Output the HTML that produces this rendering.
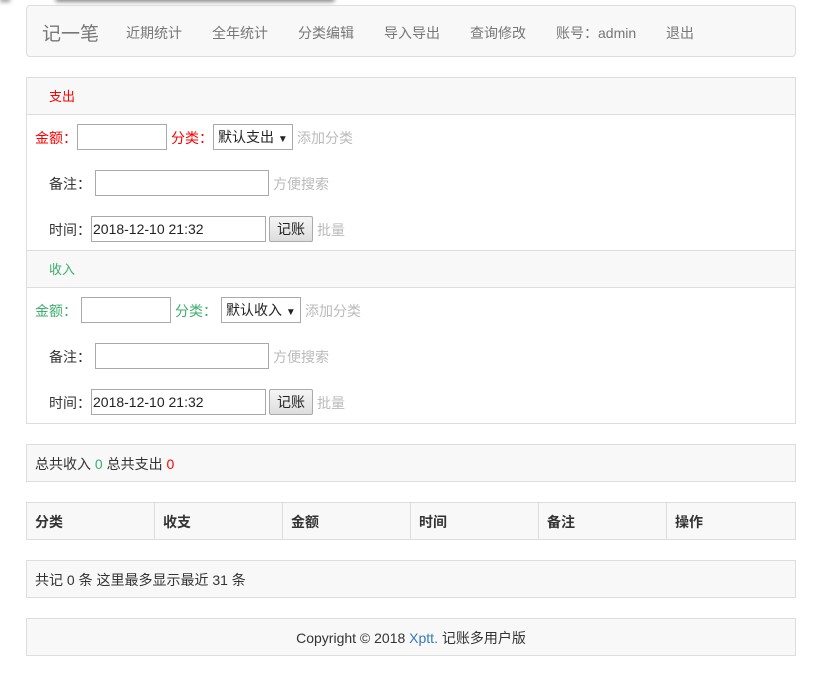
<!DOCTYPE html>
<html><head><meta charset="utf-8"><style>
*{box-sizing:border-box;margin:0;padding:0}
body{width:816px;height:680px;background:#fff;font-family:"Liberation Sans","Noto Sans CJK SC",sans-serif;font-size:14px;color:#333;position:relative;overflow:hidden}
.abs{position:absolute}
.box{position:absolute;left:26px;width:770px;border:1px solid #ddd;background:#f8f8f8}
.nav a{position:absolute;top:17px;color:#777;font-size:14px}
.red{color:#f00}.green{color:#3cae6f}.gray{color:#bbb}
.inp{position:absolute;height:26px;border:1px solid #a9a9a9;background:#fff;font-size:14px;line-height:24px;padding-left:1px;color:#222}
.btn{position:absolute;height:26px;width:44px;border:1px solid #aaa;border-radius:2px;background:linear-gradient(#f6f6f6,#ddd);text-align:center;line-height:24px;font-size:14px;color:#222}
.sel{position:absolute;height:26px;border:1px solid #a9a9a9;background:#fff;font-size:14px;line-height:24px;padding-left:4px;color:#222}
.t{position:absolute;font-size:14px;line-height:16px}
</style></head><body>
<div class="abs" style="left:55px;top:-4px;width:280px;height:6px;background:#888;filter:blur(2px);border-radius:3px"></div>
<div class="abs" style="left:0;top:-3px;width:10px;height:5px;background:#999;filter:blur(2px)"></div>
<div class="box nav" style="top:5px;height:52px;border-radius:4px">
<span class="abs" style="left:15px;top:13px;font-size:19px;color:#777">记一笔</span>
<a style="left:99px">近期统计</a><a style="left:185px">全年统计</a><a style="left:271px">分类编辑</a><a style="left:357px">导入导出</a><a style="left:443px">查询修改</a><a style="left:529px">账号：admin</a><a style="left:639px">退出</a>
</div>
<div class="box" style="top:77px;height:347px;background:#fff">
<div class="abs" style="left:0;top:0;width:768px;height:37px;background:#f8f8f8;border-bottom:1px solid #ddd"></div>
<span class="t red" style="left:22px;top:11px;font-size:13px">支出</span>
<span class="t red" style="left:8px;top:52px">金额：</span>
<div class="inp" style="left:50px;top:46px;width:90px"></div>
<span class="t red" style="left:144px;top:52px">分类：</span>
<div class="sel" style="left:186px;top:46px;width:80px">默认支出 <span style="font-size:10px">▼</span></div>
<span class="t gray" style="left:270px;top:52px">添加分类</span>
<span class="t" style="left:22px;top:98px">备注：</span>
<div class="inp" style="left:68px;top:92px;width:174px"></div>
<span class="t gray" style="left:246px;top:98px">方便搜索</span>
<span class="t" style="left:22px;top:144px">时间：</span>
<div class="inp" style="left:64px;top:138px;width:175px">2018-12-10 21:32</div>
<div class="btn" style="left:242px;top:138px">记账</div>
<span class="t gray" style="left:290px;top:144px">批量</span>
<div class="abs" style="left:0;top:172px;width:768px;height:38px;background:#f8f8f8;border-top:1px solid #ddd;border-bottom:1px solid #ddd"></div>
<span class="t green" style="left:22px;top:184px;font-size:13px">收入</span>
<span class="t green" style="left:8px;top:225px">金额：</span>
<div class="inp" style="left:54px;top:219px;width:90px"></div>
<span class="t green" style="left:148px;top:225px">分类：</span>
<div class="sel" style="left:194px;top:219px;width:80px">默认收入 <span style="font-size:10px">▼</span></div>
<span class="t gray" style="left:278px;top:225px">添加分类</span>
<span class="t" style="left:22px;top:271px">备注：</span>
<div class="inp" style="left:68px;top:265px;width:174px"></div>
<span class="t gray" style="left:246px;top:271px">方便搜索</span>
<span class="t" style="left:22px;top:317px">时间：</span>
<div class="inp" style="left:64px;top:311px;width:175px">2018-12-10 21:32</div>
<div class="btn" style="left:242px;top:311px">记账</div>
<span class="t gray" style="left:290px;top:317px">批量</span>
</div>
<div class="box" style="top:444px;height:38px"><span class="t" style="left:8px;top:11px">总共收入 <span class="green">0</span> 总共支出 <span class="red">0</span></span></div>
<div class="box" style="top:502px;height:38px;font-weight:bold">
<span class="t" style="left:8px;top:11px">分类</span>
<div class="abs" style="left:127px;top:0;height:36px;border-left:1px solid #ddd"></div><span class="t" style="left:136px;top:11px">收支</span>
<div class="abs" style="left:255px;top:0;height:36px;border-left:1px solid #ddd"></div><span class="t" style="left:264px;top:11px">金额</span>
<div class="abs" style="left:383px;top:0;height:36px;border-left:1px solid #ddd"></div><span class="t" style="left:392px;top:11px">时间</span>
<div class="abs" style="left:511px;top:0;height:36px;border-left:1px solid #ddd"></div><span class="t" style="left:520px;top:11px">备注</span>
<div class="abs" style="left:639px;top:0;height:36px;border-left:1px solid #ddd"></div><span class="t" style="left:648px;top:11px">操作</span>
</div>
<div class="box" style="top:560px;height:38px"><span class="t" style="left:8px;top:11px">共记 0 条 这里最多显示最近 31 条</span></div>
<div class="box" style="top:618px;height:38px"><span class="t" style="left:0;width:768px;text-align:center;top:11px">Copyright © 2018 <span style="color:#337ab7">Xptt.</span> 记账多用户版</span></div>
</body></html>
